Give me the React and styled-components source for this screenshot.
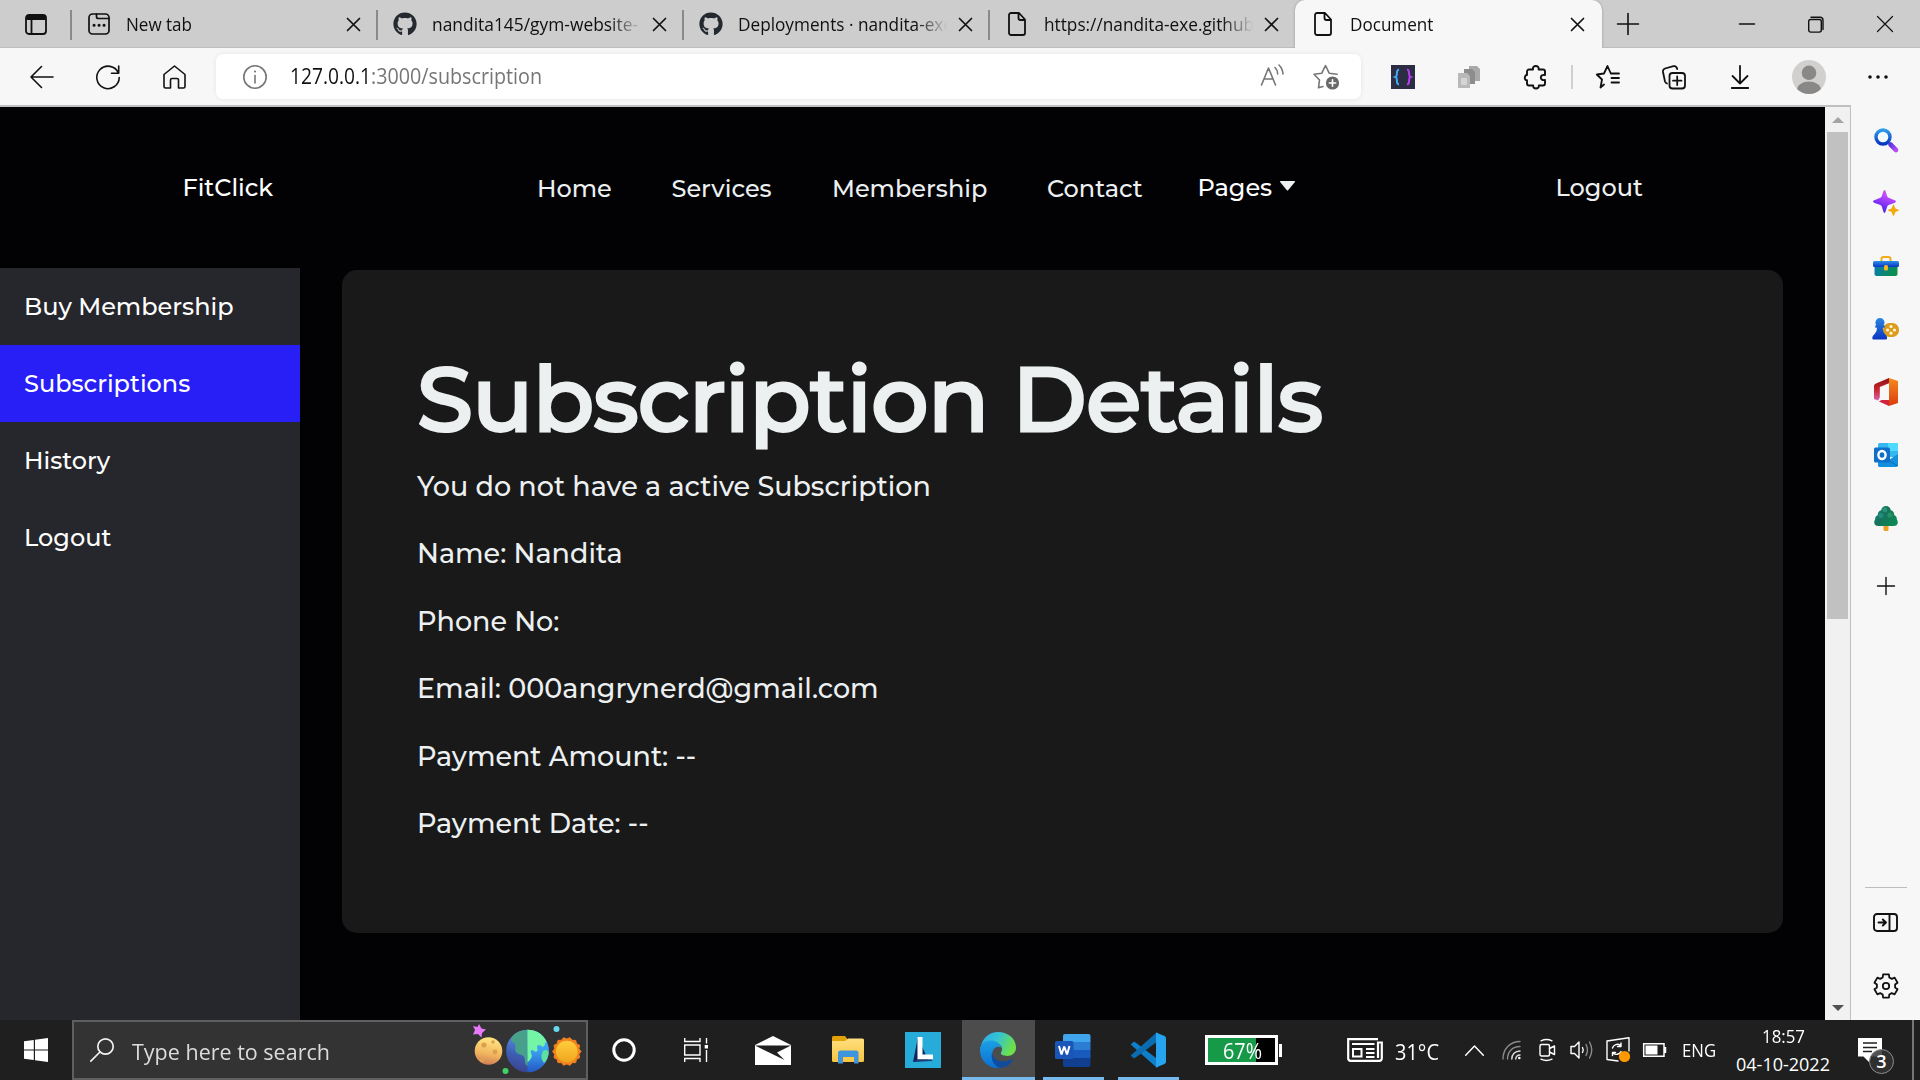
import React from "react";
import styled, { createGlobalStyle, css } from "styled-components";
import { FaGithub } from "react-icons/fa";

const Global = createGlobalStyle`
  *, *::before, *::after { box-sizing: border-box; }
  html, body { margin: 0; padding: 0; overflow: hidden; }
  svg { display: block; flex: none; overflow: visible; }
`;

const uiFont = css`font-family: "Segoe UI", "Open Sans", "Noto Sans", sans-serif;`;
const siteFont = css`font-family: Montserrat, Inter, sans-serif;`;

const Desktop = styled.div`
  width: 1920px;
  height: 1080px;
  display: flex;
  flex-direction: column;
  overflow: hidden;
  background: #f7f7f7;
`;

/* Interface text, narrowed by the factor $k */
const Label = styled.span`
  display: inline-block;
  white-space: pre;
  transform: scaleX(${(p) => p.$k || 1});
  transform-origin: 0 50%;
`;

/* ---------- tab strip ---------- */
const TabStrip = styled.div`
  ${uiFont}
  height: 48px;
  flex: none;
  display: flex;
  background: #cdcdcd;
  box-shadow: inset 0 -1px 0 #bdbdbd;
  font-size: 18px;
  line-height: 24px;
  color: #101010;
`;
const TabActions = styled.div`
  width: 71px;
  flex: none;
  padding: 14px 0 0 25px;
`;
const Tab = styled.div`
  width: ${(p) => p.$w || 306}px;
  flex: none;
  height: 48px;
  display: flex;
  align-items: center;
  padding-left: ${(p) => (p.$active ? 19 : 16)}px;
  position: relative;
  ${(p) =>
    p.$active
      ? css`
          background: #f7f7f7;
          border-radius: 10px 10px 0 0;
          box-shadow: 0 0 3px rgba(0, 0, 0, 0.25);
          clip-path: inset(0 -4px 0 -4px);
        `
      : css`
          &::before {
            content: "";
            position: absolute;
            left: -1px;
            top: 10px;
            height: 30px;
            width: 2px;
            background: #8a8a8a;
          }
        `}
`;
const TabIcon = styled.div`
  width: ${(p) => p.$w || 24}px;
  display: flex;
  justify-content: center;
`;
const TabTitle = styled.div`
  width: ${(p) => p.$w}px;
  margin-left: ${(p) => p.$gap}px;
  padding-bottom: 1px;
  ${(p) =>
    p.$fade &&
    css`
      mask-image: linear-gradient(to right, #000 calc(100% - 32px), transparent calc(100% - 1px));
    `}
`;
const TabClose = styled.div`
  margin-left: auto;
  margin-right: ${(p) => p.$r || 17.5}px;
  padding-top: 1px;
`;
const WindowButtons = styled.div`
  flex: 1;
  display: flex;
  align-items: center;
  padding-left: 15px;
`;
const WindowButton = styled.div`
  width: 69px;
  display: flex;
  justify-content: center;
  &:nth-child(2) { margin-left: 73.5px; }
`;

/* ---------- toolbar ---------- */
const Toolbar = styled.div`
  ${uiFont}
  height: 57px;
  flex: none;
  display: flex;
  align-items: center;
  padding: 0 0 0 9px;
  background: #f7f7f7;
`;
const Slot = styled.div`
  width: ${(p) => p.$w || 66}px;
  flex: none;
  display: flex;
  justify-content: center;
  align-items: center;
`;
const AddressBar = styled.div`
  width: 1145px;
  flex: none;
  height: 45px;
  margin: 0 9px;
  padding: 0 20px 0 27px;
  display: flex;
  align-items: center;
  border-radius: 7px;
  background: #fff;
  box-shadow: 0 0 5px rgba(0, 0, 0, 0.08);
`;
const Url = styled.div`
  flex: 1;
  display: flex;
  margin-left: 23px;
  font-size: 21px;
  line-height: 28px;
  color: #767676;
  padding-bottom: 1px;
`;
const Host = styled.div`
  width: 80.5px;
  color: #111;
`;
const AddressIcons = styled.div`
  display: flex;
  gap: 28px;
`;
const ToolDivider = styled.div`
  width: 2px;
  height: 24px;
  background: #cfcfcf;
  margin: 0 3px 0 2px;
`;

/* ---------- body ---------- */
const Body = styled.div`
  flex: 1;
  display: flex;
  min-height: 0;
`;
const Viewport = styled.div`
  width: 1851px;
  display: flex;
  border-top: 2px solid #c0c0c0;
  border-right: 1px solid #c0c0c0;
`;
const Site = styled.div`
  ${siteFont}
  flex: 1;
  background: #020204;
  color: #ecf0f1;
  font-weight: 500;
  font-size: 24px;
  line-height: 30px;
  display: flex;
  flex-direction: column;
`;
const ScrollTrack = styled.div`
  width: 25px;
  display: flex;
  flex-direction: column;
  align-items: center;
  background: #f1f1f1;
`;
const ScrollButton = styled.div`
  height: 25px;
  display: flex;
  align-items: center;
`;
const ScrollThumb = styled.div`
  width: 21px;
  height: 487px;
  margin-bottom: auto;
  background: #c1c1c1;
`;
const SiteHeader = styled.header`
  height: 161px;
  display: flex;
  padding: 66px 0 0 182.5px;
`;
const Brand = styled.div`
  width: 354.5px;
  color: #fff;
`;
const NavLinks = styled.nav`
  display: flex;
  padding-top: 1px;
`;
const NavLink = styled.a`
  width: ${(p) => p.$w}px;
`;
const PagesLink = styled.div`
  display: flex;
  width: 358px;
  color: #fff;
  svg { margin: 8px 0 0 8px; }
`;
const SiteBody = styled.div`
  flex: 1;
  display: flex;
`;
const Menu = styled.aside`
  width: 300px;
  background: #26272c;
`;
const MenuItem = styled.div`
  height: 77px;
  padding-left: 24px;
  display: flex;
  align-items: center;
  color: #fff;
  background: ${(p) => (p.$active ? "#271ff6" : "transparent")};
`;
const Card = styled.section`
  width: 1441px;
  height: 663px;
  margin: 2px 0 0 42px;
  padding: 70px 0 0 75px;
  border-radius: 15px;
  background: #191919;
`;
const Title = styled.h1`
  margin: 0;
  height: 119.6px;
  font-size: 90px;
  line-height: 119px;
  font-weight: 500;
  letter-spacing: -0.55px;
  -webkit-text-stroke: 3px #ecf0f1;
  paint-order: stroke fill;
`;
const Line = styled.p`
  margin: 0;
  height: 67.5px;
  font-size: 27px;
  line-height: 54px;
`;

/* ---------- browser sidebar ---------- */
const SideRail = styled.div`
  flex: 1;
  display: flex;
  flex-direction: column;
  align-items: center;
  padding: 3.5px 0 0 0;
`;
const RailItem = styled.div`
  height: 63px;
  display: flex;
  align-items: center;
  margin-top: ${(p) => (p.$spaced ? 5 : 0)}px;
`;
const RailBottom = styled.div`
  margin-top: auto;
  width: 42px;
  display: flex;
  flex-direction: column;
  align-items: center;
  border-top: 1px solid #bdbdbd;
  padding: 3px 0 3px;
`;

/* ---------- taskbar ---------- */
const Taskbar = styled.div`
  ${uiFont}
  height: 60px;
  flex: none;
  display: flex;
  align-items: center;
  background: #1f1f1f;
  color: #fff;
`;
const Start = styled.div`
  width: 72px;
  display: flex;
  justify-content: center;
`;
const Search = styled.div`
  width: 516px;
  height: 60px;
  border: 2px solid #5f5f5f;
  background: #333;
  display: flex;
  align-items: center;
  padding-left: 16px;
`;
const SearchText = styled.div`
  margin-left: 18px;
  width: 338px;
  font-size: 22.5px;
  line-height: 30px;
  padding-top: 3px;
  color: #dcdcdc;
`;
const TaskItems = styled.div`
  display: flex;
  gap: 2px;
  padding-left: 5px;
`;
const TaskItem = styled.div`
  width: 73px;
  height: 60px;
  display: flex;
  justify-content: center;
  align-items: center;
  padding-right: 2px;
  background: ${(p) => (p.$active ? "#4c4c4c" : "transparent")};
  position: relative;
  ${(p) =>
    p.$open &&
    css`
      &::after {
        content: "";
        position: absolute;
        bottom: 0;
        left: ${p.$active ? 0 : 6}px;
        right: ${p.$active ? 0 : 6}px;
        height: 3px;
        background: #76b9ed;
      }
    `}
`;
const BatteryMeter = styled.div`
  margin-left: 20px;
  display: flex;
  align-items: center;
`;
const BatteryBody = styled.div`
  width: 73px;
  height: 30px;
  border: 3px solid #fff;
  background: linear-gradient(to right, #169a48 48px, #000 48px);
  font-size: 21px;
  line-height: 27px;
  padding-left: 15px;
`;
const BatteryNub = styled.div`
  width: 3px;
  height: 13px;
  margin-left: 1px;
  background: #fff;
`;
const Weather = styled.div`
  margin-left: 65px;
  width: 118px;
  display: flex;
  align-items: center;
  font-size: 21px;
  line-height: 28px;
`;
const WeatherText = styled.div`
  margin: 4px 0 0 12px;
`;
const Tray = styled.div`
  display: flex;
  align-items: center;
`;
const TrayIcon = styled.div`
  width: ${(p) => p.$w}px;
`;
const Language = styled.div`
  width: 54px;
  font-size: 18px;
  line-height: 24px;
`;
const Clock = styled.div`
  width: 122px;
  font-size: 18px;
  line-height: 28px;
`;
const ClockRow = styled.div`
  height: 28px;
  padding-left: ${(p) => p.$pad || 0}px;
`;
const Notifications = styled.div`
  width: 54px;
  height: 60px;
  position: relative;
`;
const NoteIcon = styled.div`
  padding-top: 18px;
`;
const Badge = styled.div`
  position: absolute;
  left: 11px;
  top: 29px;
  width: 25px;
  height: 25px;
  border: 1px solid #8d8d8d;
  border-radius: 50%;
  background: rgba(50, 50, 50, 0.85);
  font-size: 18px;
  font-weight: 600;
  line-height: 23px;
  text-align: center;
`;
const ShowDesktop = styled.div`
  width: 2px;
  height: 60px;
  background: #767676;
`;

/* ---------- icons ---------- */
const Stroke = ({ w = 24, h = 24, c = "#111", sw = 1.6, children }) => (
  <svg width={w} height={h} viewBox={`0 0 ${w} ${h}`} fill="none" stroke={c} strokeWidth={sw} strokeLinecap="round" strokeLinejoin="round">
    {children}
  </svg>
);
const CloseIcon = ({ s = 13, sw = 1.7 }) => (
  <Stroke w={s} h={s} sw={sw}><path d={`M.5 .5 L${s - 0.5} ${s - 0.5} M${s - 0.5} .5 L.5 ${s - 0.5}`} /></Stroke>
);
const FileIcon = () => (
  <Stroke w={18} h={24} sw={1.8}><path d="M3 1H11L17 7.5V21a2 2 0 0 1-2 2H3a2 2 0 0 1-2-2V3a2 2 0 0 1 2-2ZM10.5 1.5V6a2 2 0 0 0 2 2H17" /></Stroke>
);
const NewTabIcon = () => (
  <Stroke w={22} h={22} sw={1.7}>
    <rect x="1" y="1" width="20" height="20" rx="3.5" />
    <path d="M8.500 1V3.500a2 2 0 0 0 2 2H21" />
    <path d="M6 12.2h.1M11 12.2h.1M16 12.2h.1" strokeWidth="3" />
  </Stroke>
);

const gearPath = (() => {
  const pts = [];
  for (let i = 0; i < 6; i++) {
    const a = (i * 60 - 90) * (Math.PI / 180);
    const at = (r, d) => {
      const t = a + (d * Math.PI) / 180;
      return `${(13 + r * Math.cos(t)).toFixed(2)} ${(13 + r * Math.sin(t)).toFixed(2)}`;
    };
    pts.push(at(9.2, -21), at(12, -14), at(12, 14), at(9.2, 21));
  }
  return "M" + pts.join("L") + "Z";
})();

const Grad = ({ id, stops, x2 = 0, y2 = 1 }) => (
  <linearGradient id={id} x1="0" y1="0" x2={x2} y2={y2}>
    {stops.map((c, i) => <stop key={i} offset={i / (stops.length - 1)} stopColor={c} />)}
  </linearGradient>
);

const SearchGlass = () => (
  <svg width="24" height="24" viewBox="0 0 24 24">
    <defs><Grad id="sg" stops={["#2d9be8", "#0a35c2"]} /><Grad id="sh" stops={["#5b35e0", "#b44df5"]} x2={1} /></defs>
    <path d="M16.5 16.5L22 22" stroke="url(#sh)" strokeWidth="4.6" strokeLinecap="round" />
    <circle cx="9" cy="9" r="7" fill="#f4fbff" stroke="url(#sg)" strokeWidth="3.4" />
  </svg>
);
const Sparkle = () => (
  <svg width="26" height="26" viewBox="0 0 26 26">
    <defs><Grad id="sp" stops={["#c44cff", "#6a2af5", "#2d1fd0"]} x2={-0.4} /></defs>
    <path d="M11.5 0c1.2 0 2 5 3 6.800 1 1.800 8.500 3 8.500 4.700s-7.500 2.600-8.500 4.400c-1 1.800-1.800 7.100-3 7.100s-2-5.300-3-7.100C7.500 14.100 0 13.200 0 11.500s7.500-2.900 8.500-4.700C9.500 5 10.300 0 11.500 0Z" fill="url(#sp)" />
    <path d="M20.500 14.500c.8 0 1.300 3.200 2 4 .7.700 3.500 1 3.500 1.800s-2.800 1.100-3.500 1.800c-.7.800-1.200 4-2 4s-1.300-3.200-2-4c-.7-.7-3.500-1-3.500-1.800s2.800-1.100 3.500-1.800c.7-.8 1.200-4 2-4Z" fill="#f3ab0c" />
  </svg>
);
const Briefcase = () => (
  <svg width="26" height="20" viewBox="0 0 26 20">
    <defs><Grad id="bc" stops={["#0a79b8", "#0b8f4c"]} x2={1} y2={0.3} /><Grad id="bt" stops={["#2d8fe8", "#0a35c2"]} /></defs>
    <path d="M8.500 6V3a2 2 0 0 1 2-2h5a2 2 0 0 1 2 2v3" fill="none" stroke="#efac1b" strokeWidth="2" />
    <rect x="1.500" y="8" width="23" height="12" rx="2" fill="url(#bc)" />
    <rect x="0" y="5" width="26" height="6" rx="1.500" fill="url(#bt)" />
    <rect x="11" y="9" width="4" height="5.500" rx="1.500" fill="#f7b51e" />
  </svg>
);
const Games = () => (
  <svg width="27" height="22" viewBox="0 0 27 22">
    <defs><Grad id="pw" stops={["#2a86e0", "#0a35c2"]} /></defs>
    <rect x="11" y="5" width="16" height="14" rx="6.500" fill="#dd9b1c" />
    <g fill="#fff6d8"><circle cx="19" cy="8.500" r="1.600" /><circle cx="19" cy="15.200" r="1.600" /><circle cx="15.600" cy="12" r="1.600" /><circle cx="22.500" cy="12" r="1.600" /></g>
    <path d="M8 0a4.500 4.500 0 0 1 3.600 7.200h1v2.500h-1.800c0 3 1 5.300 3.200 7.500 1.500 1.300 1.500 4.300 0 4.300H1.500c-1.500 0-1.500-3 0-4.300C3.800 15 5 12.700 5 9.700H3.300V7.200h1A4.500 4.500 0 0 1 8 0Z" fill="url(#pw)" />
  </svg>
);
const Office = () => (
  <svg width="24" height="28" viewBox="0 0 24 28">
    <defs><Grad id="of" stops={["#f58a1f", "#dc3a0c"]} /><Grad id="og" stops={["#8e1218", "#c8232c", "#d765b0"]} /></defs>
    <path d="M15 0L24 3V25L15 28Z" fill="url(#of)" />
    <path d="M15 0L2 5.500C.7 6 0 7 0 8.300V21l4 1.500 1.800-3V9L15 5.200Z" fill="url(#og)" />
    <path d="M5 23.500L7.500 22H15v6Z" fill="#d0233c" />
  </svg>
);
const Outlook = () => (
  <svg width="24" height="24" viewBox="0 0 24 24">
    <rect x="4" y="0" width="20" height="14" rx="1.500" fill="#35b8f1" />
    <path d="M14 0H24V8H14Z" fill="#50d9ff" />
    <path d="M4 12L14 17.500 24 11V22a2 2 0 0 1-2 2H5.500a1.500 1.500 0 0 1-1.500-1.500Z" fill="#1490df" />
    <path d="M14 17.500L24 23" stroke="#0c6cb5" strokeWidth="1" />
    <rect x="0" y="4.500" width="16" height="15" rx="1.500" fill="#0f6fc9" />
    <ellipse cx="8" cy="12" rx="3.600" ry="4" fill="none" stroke="#fff" strokeWidth="2.400" />
  </svg>
);
const Tree = () => (
  <svg width="24" height="25" viewBox="0 0 24 25">
    <defs><Grad id="tr" stops={["#0d8a6e", "#17725c", "#0c8a55"]} x2={1} y2={0.6} /></defs>
    <rect x="9.500" y="18" width="5" height="7" rx="1.500" fill="#efa221" />
    <path d="M12 0c2.700 0 4.700 2 4.700 4.200 2.500.6 3.800 2.600 3.400 4.800 1.800.8 2.900 2.200 2.700 4.200 2 2.800 1 6.800-3.300 6.800H4.500C.2 20-.8 16 1.200 13.200 1 11.200 2.100 9.800 3.900 9 3.500 6.800 4.800 4.800 7.300 4.200 7.300 2 9.300 0 12 0Z" fill="url(#tr)" />
    <circle cx="11" cy="4" r="2.400" fill="#3ba78b" opacity=".6" /><circle cx="7" cy="9.500" r="2.600" fill="#2f9fa0" opacity=".5" /><circle cx="16" cy="9" r="2.600" fill="#3ba77b" opacity=".5" />
  </svg>
);
const EdgeLogo = () => (
  <svg width="36" height="36" viewBox="0 0 36 36">
    <defs>
      <Grad id="e1" stops={["#2aa8ea", "#35c3d4", "#6be04b"]} x2={1} y2={0.35} />
      <Grad id="e2" stops={["#1ba0e6", "#0c6fd0"]} />
      <Grad id="e3" stops={["#0b4fa8", "#134a94"]} x2={1} />
    </defs>
    <path d="M1 14C2.500 6 9.500 0 18 0c10.500 0 18 7 18 15.500 0 5.500-4 8.500-8.800 8.500-4.200 0-7-1.500-6.200-3.400 1.500-2 1.500-5.200-.8-7.500C15 8 4 8.500 1 14Z" fill="url(#e1)" />
    <path d="M0 18C0 12 4.500 8.600 10.500 8.600c5 0 9.800 2.500 10.500 7.200-2.500-2-6.500-.8-8.200 3.200C10.500 25 14.500 33.500 22 35.500 9 38.500 0 28.500 0 18Z" fill="url(#e2)" />
    <path d="M12.500 20c-.8 5.500 4.500 9.800 11 9.300 3.700-.3 7-1.600 8.800-2.400.6-.3 1 .3.700.9C30.500 32.500 26 36 20 36 13 34 10 25 12.500 20Z" fill="url(#e3)" />
  </svg>
);
const Word = () => (
  <svg width="36" height="33" viewBox="0 0 36 33">
    <path d="M10 0H33.500A2 2 0 0 1 35.500 2V8H8V2a2 2 0 0 1 2-2Z" fill="#41a5ee" />
    <path d="M8 8H35.500v8H8Z" fill="#2b7cd3" /><path d="M8 16H35.500v8H8Z" fill="#185abd" />
    <path d="M8 24H35.500v7a2 2 0 0 1-2 2H10a2 2 0 0 1-2-2Z" fill="#103f91" />
    <rect x="0" y="7" width="18.500" height="18" rx="1.500" fill="#1a56b8" />
    <path d="M4 12L6.500 20.500 9.200 12.500 12 20.500 14.500 12" fill="none" stroke="#fff" strokeWidth="2" strokeLinejoin="bevel" />
  </svg>
);
const Code = () => (
  <svg width="36" height="36" viewBox="0 0 36 36">
    <path d="M.7 12.500L3 10.300a1.800 1.800 0 0 1 2.300 0L28 27.500V35.500L26 35Z" fill="#0f7fc9" />
    <path d="M.7 23.500L3 25.700a1.800 1.800 0 0 0 2.300 0L28 9V.5L26 1Z" fill="#0b6cb2" />
    <path d="M26 35.600V.4L34.500 4A2.500 2.500 0 0 1 36 6.200V29.800A2.500 2.500 0 0 1 34.500 32Z" fill="#27a4f0" />
  </svg>
);
const Folder = () => (
  <svg width="32" height="28" viewBox="0 0 32 28">
    <defs><Grad id="fo" stops={["#ffdf7e", "#f9c440"]} /></defs>
    <path d="M0 1.500A1.500 1.500 0 0 1 1.500 0H13l2 2.500V6H0Z" fill="#e2a106" />
    <path d="M0 5H13L16 2.500H30.500A1.500 1.500 0 0 1 32 4V24.500A1.500 1.500 0 0 1 30.500 26H1.500A1.500 1.500 0 0 1 0 24.500Z" fill="url(#fo)" />
    <path d="M6 27.500V17a2.500 2.500 0 0 1 2.500-2.500H24a2.500 2.500 0 0 1 2.500 2.500V27.500H22V21H11V27.500Z" fill="#3e95dc" />
  </svg>
);
const MailIcon = () => (
  <svg width="36" height="29" viewBox="0 0 36 29">
    <path d="M0 9L18 0 36 9V29H0Z" fill="#fff" />
    <path d="M0 9.500H36L22 16.500 29.500 24 Z" fill="#1f1f1f" />
  </svg>
);
const LApp = () => (
  <svg width="36" height="36" viewBox="0 0 36 36">
    <path d="M0 0H36V36H0Z" fill="#27acd9" />
    <path d="M13 5L8 30 23 28Z" fill="#12245c" />
    <path d="M12.500 5H17.500V22.500H28V27.500H12.500Z" fill="#fff" />
    <path d="M8 30L12.500 27.500H28L26.500 29Z" fill="#1a3a78" />
  </svg>
);
const sunPoints = Array.from({ length: 28 }, (_, i) => {
  const a = (i * Math.PI) / 14;
  const r = i % 2 ? 12.4 : 14.2;
  return `${(96.8 + r * Math.cos(a)).toFixed(2)},${(29.5 + r * Math.sin(a)).toFixed(2)}`;
}).join(" ");
const Planets = () => (
  <svg width="112" height="56" viewBox="0 0 112 56">
    <defs>
      <Grad id="mo" stops={["#ffe07c", "#f0b45e", "#c66a52"]} x2={-0.2} />
      <Grad id="ea" stops={["#5f96e8", "#3c5fb5", "#3c3a86"]} x2={-0.2} />
      <Grad id="er" stops={["#48b8ff", "#3aa0f0", "#2457c4"]} />
      <Grad id="su" stops={["#ffce3c", "#f0a51e"]} />
    </defs>
    <path d="M9 2l2.500 4.500 4.500 1-4 3.500-.5 4.500-3.500-3.500-5 .5 2-4.500L3 4l4.500 1Z" fill="#e879f9" />
    <circle cx="18.500" cy="29" r="13.800" fill="url(#mo)" />
    <g fill="#dda052"><circle cx="14" cy="23" r="2.600" /><circle cx="23" cy="20" r="1.700" /><circle cx="25" cy="30" r="2.400" /><circle cx="12" cy="38" r="2.200" /></g>
    <circle cx="57.500" cy="29" r="21.300" fill="url(#ea)" />
    <path d="M57.500 7.700a21.300 21.300 0 0 1 0 42.600Z" fill="url(#er)" />
    <path d="M43 13.500C47 10 52 8 57.500 7.700V44c-2-.5-2.500-4-3-8-1-3.500-6-3-8.500-6-2-3.500 1-7-2-9-2.500-1-4-3-1-7.500Z" fill="#46a08a" />
    <path d="M57.500 7.700C66 7.700 73 12 76.500 19.500c-2 1.500-1 4-3 5s-3-3-6-1c-1.500 2 1.500 4.500-1 6-2.500.5-4-3-5.500-1s2 4 .5 7c-1.500 2-2 3.500-4 5Z" fill="#74f5a5" />
    <path d="M75 28c2 0 3.600 1 3.600 3-.4 4-2 8-4.600 10-2-3-3-5-2.500-8 .5-2 1.500-5 3.500-5Z" fill="#5fe0a0" />
    <polygon points={sunPoints} fill="#f3821f" stroke="#f3821f" strokeWidth="1" strokeLinejoin="round" />
    <circle cx="96.800" cy="29.500" r="10.800" fill="url(#su)" />
    <circle cx="86.500" cy="7" r="3" fill="#65d8f0" /><circle cx="35.500" cy="49" r="3" fill="#3fd46a" />
  </svg>
);

const lines = [
  "You do not have a active Subscription",
  "Name: Nandita",
  "Phone No:",
  "Email: 000angrynerd@gmail.com",
  "Payment Amount: --",
  "Payment Date: --",
];
const menu = ["Buy Membership", "Subscriptions", "History", "Logout"];
const nav = [
  ["Home", 134.5],
  ["Services", 160.5],
  ["Membership", 215],
  ["Contact", 150.5],
];
const tabs = [
  ["New tab", <NewTabIcon />, 0.947, false],
  ["nandita145/gym-website-", <FaGithub size={24} color="#24292f" />, 0.966, true],
  ["Deployments · nandita-exe", <FaGithub size={24} color="#24292f" />, 0.956, true],
  ["https://nandita-exe.github", <FileIcon />, 0.957, true],
];

export default function App() {
  return (
    <Desktop>
      <Global />
      <TabStrip>
        <TabActions>
          <Stroke w={22} h={21} sw={1.8}>
            <rect x="1" y="1" width="20" height="19" rx="3" />
            <path d="M1.500 3.500H20.500" strokeWidth="5" strokeLinecap="butt" />
            <path d="M6.500 5V20" />
          </Stroke>
        </TabActions>
        {tabs.map(([name, icon, k, fade]) => (
          <Tab key={name}>
            <TabIcon>{icon}</TabIcon>
            <TabTitle $w={210} $gap={15} $fade={fade}><Label $k={k}>{name}</Label></TabTitle>
            <TabClose><CloseIcon /></TabClose>
          </Tab>
        ))}
        <Tab $active $w={307}>
          <TabIcon $w={18}><FileIcon /></TabIcon>
          <TabTitle $w={160} $gap={18}><Label $k={0.95}>Document</Label></TabTitle>
          <TabClose $r={18}><CloseIcon /></TabClose>
        </Tab>
        <WindowButtons>
          <Stroke w={22} h={22}><path d="M11 .5V21.500M.5 11H21.500" /></Stroke>
          <WindowButton><Stroke w={16} h={2} sw={1.5}><path d="M.5 1H15.500" /></Stroke></WindowButton>
          <WindowButton>
            <Stroke w={16} h={17} sw={1.4}><rect x=".7" y="3.500" width="12.600" height="12.600" rx="2" /><path d="M3 1.200H12a3 3 0 0 1 3 3V13.500" /></Stroke>
          </WindowButton>
          <WindowButton><CloseIcon s={16} sw={1.2} /></WindowButton>
        </WindowButtons>
      </TabStrip>

      <Toolbar>
        <Slot><Stroke><path d="M23 12H1M11.500 1.500L1 12l10.500 10.500" /></Stroke></Slot>
        <Slot><Stroke><path d="M22.300 8A11.200 11.200 0 1 0 23.200 12.500M22.700 1V8.200H15.500" /></Stroke></Slot>
        <Slot><Stroke w={23}><path d="M1 9.500L11.500 1 22 9.500V21.500a1.500 1.500 0 0 1-1.500 1.500H15.500V15a1.500 1.500 0 0 0-1.500-1.500H9A1.500 1.500 0 0 0 7.500 15V23H2.500A1.500 1.500 0 0 1 1 21.500Z" /></Stroke></Slot>
        <AddressBar>
          <Stroke c="#767676"><circle cx="12" cy="12" r="11.200" /><path d="M12 10.500V18" /><path d="M12 6.500h.01" strokeWidth="2.200" /></Stroke>
          <Url>
            <Host><Label $k={0.914}>127.0.0.1</Label></Host>
            <Label $k={0.939}>:3000/subscription</Label>
          </Url>
          <AddressIcons>
            <Stroke w={25} c="#767676"><path d="M1.500 21L8.500 4 15.500 21M4 15H13M15 3.500a9 9 0 0 1 2.700 6.500M19 1a14 14 0 0 1 4 9" /></Stroke>
            <Stroke w={28} h={26} c="#767676">
              <path d="M10 22.500L5.500 23.800 6.500 16 1 10.300 8.800 9.200 12.500 1.500 16.200 9.200 24 10.300" />
              <circle cx="19.500" cy="19" r="6.600" fill="#696969" stroke="none" /><path d="M19.500 15.800V22.200M16.300 19H22.700" stroke="#fff" />
            </Stroke>
          </AddressIcons>
        </AddressBar>
        <Slot>
          <svg width="24" height="24" viewBox="0 0 24 24" fill="none" strokeWidth="2">
            <path d="M0 0H24V24H0Z" fill="#2c2d43" />
            <path d="M8 4.500C4 5 7.500 11 4.500 12 7.500 13 4 19 8 19.500" stroke="#3fa9f5" /><path d="M16 4.500C20 5 16.500 11 19.500 12 16.500 13 20 19 16 19.500" stroke="#b53df0" />
          </svg>
        </Slot>
        <Slot>
          <svg width="22" height="22" viewBox="0 0 22 22">
            <path d="M11 0h8l3 3v12H11Z" fill="#a9a9a9" /><path d="M6 3h8l3 3v12H6Z" fill="#8d8d8d" /><path d="M0 7h9l3 3v12H0Z" fill="#b9b9b9" /><path d="M3 12h6v7H3Z" fill="#d5d5d5" />
          </svg>
        </Slot>
        <Slot $w={67}>
          <Stroke sw={1.9}><path d="M3 6.500a2 2 0 0 1 2-2H9C8.500 2 10 1 11.800 1s3.300 1 2.800 3.500H19a2 2 0 0 1 2 2V10c-2.500-.5-4.200.5-4.200 2.500S18.500 15.500 21 15V18.500a2 2 0 0 1-2 2H14.800C15 22.500 13.800 23.500 12 23.500S9 22.500 9.200 20.500H5a2 2 0 0 1-2-2V15.300C1.500 15.400.8 14.200.8 12.700S1.500 10 3 10Z" /></Stroke>
        </Slot>
        <ToolDivider />
        <Slot $w={64}>
          <Stroke sw={1.8}><path d="M8 19.500L4.500 22.500 6 14.500.8 9.500 8 8.500 11.500 1 14.800 8.500H23M15.500 13H23M15.500 17.500H23" /></Stroke>
        </Slot>
        <Slot $w={68}>
          <Stroke sw={1.8}><rect x="7.500" y="8" width="15.500" height="15.500" rx="3" /><path d="M15.200 11.500V20M11 15.700H19.500M5 18.500C3.500 18 3.300 17.500 3 16.500L1 7C.7 5 1.500 4 3 3.500L11.500 1.200C13.500.8 14.700 1.800 15.200 4" /></Stroke>
        </Slot>
        <Slot $w={64}><Stroke w={18} sw={1.8}><path d="M9 .8V18M1.500 11L9 18.500 16.500 11M.8 23H17.200" /></Stroke></Slot>
        <Slot $w={74}>
          <svg width="34" height="34" viewBox="0 0 34 34">
            <defs><clipPath id="av"><circle cx="17" cy="17" r="17" /></clipPath></defs>
            <circle cx="17" cy="17" r="17" fill="#d2d0ce" />
            <g clipPath="url(#av)" fill="#8a8886"><circle cx="17" cy="12.800" r="7.300" /><ellipse cx="17" cy="30" rx="12" ry="8.500" /></g>
          </svg>
        </Slot>
        <Slot $w={64}><Stroke w={20} h={4} sw={3.6}><path d="M2 2h.01M10 2h.01M18 2h.01" /></Stroke></Slot>
      </Toolbar>

      <Body>
        <Viewport>
          <Site>
            <SiteHeader>
              <Brand>FitClick</Brand>
              <NavLinks>
                {nav.map(([t, w]) => <NavLink key={t} $w={w}>{t}</NavLink>)}
              </NavLinks>
              <PagesLink>
                Pages
                <svg width="15" height="10" viewBox="0 0 15 10"><path d="M.5 0H14.500a.6.6 0 0 1 .4 1L8.300 9a1 1 0 0 1-1.600 0L.1 1A.6.6 0 0 1 .5 0Z" fill="#ecf0f1" /></svg>
              </PagesLink>
              <NavLink>Logout</NavLink>
            </SiteHeader>
            <SiteBody>
              <Menu>
                {menu.map((t) => <MenuItem key={t} $active={t === "Subscriptions"}>{t}</MenuItem>)}
              </Menu>
              <Card>
                <Title>Subscription Details</Title>
                {lines.map((t) => <Line key={t}>{t}</Line>)}
              </Card>
            </SiteBody>
          </Site>
          <ScrollTrack>
            <ScrollButton><svg width="12" height="6" viewBox="0 0 12 6"><path d="M0 6L6 0 12 6Z" fill="#a3a3a3" /></svg></ScrollButton>
            <ScrollThumb />
            <ScrollButton><svg width="12" height="6" viewBox="0 0 12 6"><path d="M0 0L6 6 12 0Z" fill="#505050" /></svg></ScrollButton>
          </ScrollTrack>
        </Viewport>
        <SideRail>
          <RailItem><SearchGlass /></RailItem>
          <RailItem><Sparkle /></RailItem>
          <RailItem><Briefcase /></RailItem>
          <RailItem><Games /></RailItem>
          <RailItem><Office /></RailItem>
          <RailItem><Outlook /></RailItem>
          <RailItem><Tree /></RailItem>
          <RailItem $spaced><Stroke w={18} h={18} sw={1.4}><path d="M9 .5V17.500M.5 9H17.500" /></Stroke></RailItem>
          <RailBottom>
            <RailItem><Stroke w={25} h={19} sw={1.9}><rect x="1" y="1" width="23" height="17" rx="3" /><path d="M16.500 1V18M5.500 9.500H12.500M9.800 6.500L13 9.500 9.800 12.500" /></Stroke></RailItem>
            <RailItem><Stroke w={26} h={26} sw={1.8}><path d={gearPath} /><circle cx="13" cy="13" r="3.200" /></Stroke></RailItem>
          </RailBottom>
        </SideRail>
      </Body>

      <Taskbar>
        <Start>
          <svg width="24" height="24" viewBox="0 0 24 24"><path d="M0 3.300L9.800 2V11.400H0ZM11 1.800L24 0V11.400H11ZM0 12.600H9.800V22L0 20.700ZM11 12.600H24V24L11 22.200Z" fill="#fff" /></svg>
        </Start>
        <Search>
          <Stroke c="#f0f0f0" sw={1.7}><circle cx="15.500" cy="8.500" r="7.700" /><path d="M10 14L.8 23.200" /></Stroke>
          <SearchText><Label $k={0.956}>Type here to search</Label></SearchText>
          <Planets />
        </Search>
        <Slot $w={72}><Stroke w={24} c="#fff" sw={3}><circle cx="12" cy="12" r="10.200" /></Stroke></Slot>
        <Slot $w={72}>
          <svg width="24" height="24" viewBox="0 0 24 24" fill="none" stroke="#fff" strokeWidth="1.400"><path d="M.7 0V3.500H16V0M.7 24V20.500H16V24M.7 7H16V17H.7ZM22.500 0V5.500M22.500 12V24" /><path d="M20.700 7H24V10.500H20.700Z" fill="#fff" stroke="none" /></svg>
        </Slot>
        <TaskItems>
          <TaskItem><MailIcon /></TaskItem>
          <TaskItem><Folder /></TaskItem>
          <TaskItem><LApp /></TaskItem>
          <TaskItem $active $open><EdgeLogo /></TaskItem>
          <TaskItem $open><Word /></TaskItem>
          <TaskItem $open><Code /></TaskItem>
        </TaskItems>
        <BatteryMeter>
          <BatteryBody><Label $k={0.943}>67%</Label></BatteryBody>
          <BatteryNub />
        </BatteryMeter>
        <Weather>
          <svg width="36" height="24" viewBox="0 0 36 24" fill="none" stroke="#fff" strokeWidth="2.200">
            <path d="M31 1.200H1.200V20.500a2.300 2.300 0 0 0 2.300 2.300H32.500a2.300 2.300 0 0 0 2.300-2.300V4.500H31V20" /><path d="M5 6H27.500M19 11H27.500M19 15H27.500M19 19H27.500M6 11H14.500V18.500H6Z" strokeWidth="2" />
          </svg>
          <WeatherText><Label $k={0.952}>31°C</Label></WeatherText>
        </Weather>
        <Tray>
          <TrayIcon $w={37}><Stroke w={19} h={11} c="#fff" sw={1.5}><path d="M.7 10.300L9.500 1 18.300 10.300" /></Stroke></TrayIcon>
          <TrayIcon $w={37}>
            <Stroke w={19} h={20} c="#8b8b8b" sw={1.4}><path d="M1 19C1 9 8 1.500 18 1.500M5.500 19C5.500 11.500 10.500 6.500 18 6.500" /><path d="M9.800 19C9.800 14.500 13 11 18 11M13.800 19a4 4 0 0 1 4.200-4" stroke="#e0e0e0" /><circle cx="17.300" cy="18" r="1.300" fill="#fff" stroke="none" /></Stroke>
          </TrayIcon>
          <TrayIcon $w={31}><Stroke w={18} h={22} c="#fff" sw={1.4}><rect x="1" y="5.500" width="9.500" height="11.500" rx="1.500" /><path d="M10.500 9.500L15.500 7V15.500L10.500 13M2 1.800Q7.500-.8 13 1.800M2 20.200Q7.500 22.800 13 20.200" /></Stroke></TrayIcon>
          <TrayIcon $w={36}><Stroke w={24} h={20} c="#fff" sw={1.4}><path d="M1 6.500H4.500L9 2V18L4.500 13.500H1Z" /><path d="M12.500 7.500Q14 10 12.500 12.500" /><path d="M16 4.500Q19 10 16 15.500M19.500 2Q24 10 19.500 18" stroke="#8b8b8b" /></Stroke></TrayIcon>
          <TrayIcon $w={37}>
            <Stroke w={25} h={26} c="#fff" sw={1.4}><path d="M1 4L23 .8V14M1 4V22.500L12 24M6.500 11a5 5 0 0 1 8-2.500M15 6V9.500H11.500M15 14.500a5 5 0 0 1-8 1.500M6.500 18.500V15.500H9.500" /><circle cx="18.500" cy="19.500" r="5.600" fill="#ff9900" stroke="none" /></Stroke>
          </TrayIcon>
          <TrayIcon $w={39}><svg width="24" height="14" viewBox="0 0 24 14" fill="none" stroke="#fff" strokeWidth="1.500"><path d="M.7.7H21V13.300H.7ZM22.500 4V10" /><path d="M2.500 2.500H14.500V11.500H2.500Z" fill="#fff" stroke="none" /></svg></TrayIcon>
          <Language><Label $k={0.93}>ENG</Label></Language>
          <Clock>
            <ClockRow $pad={26}><Label $k={0.937}>18:57</Label></ClockRow>
            <ClockRow><Label $k={1}>04-10-2022</Label></ClockRow>
          </Clock>
        </Tray>
        <Notifications>
          <NoteIcon><svg width="24" height="24" viewBox="0 0 24 24"><path d="M0 0H24V18.500H13L11 24 5.500 18.500H0Z" fill="#fff" /><path d="M5 5H19M5 9.500H19M5 13.500H14" stroke="#1f1f1f" strokeWidth="1.400" /></svg></NoteIcon>
          <Badge>3</Badge>
        </Notifications>
        <ShowDesktop />
      </Taskbar>
    </Desktop>
  );
}
